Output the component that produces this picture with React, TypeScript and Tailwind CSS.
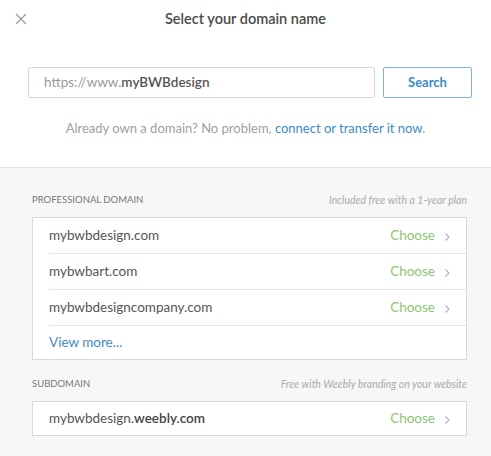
const font = { fontFamily: 'Lato, "Open Sans", "Liberation Sans", sans-serif' };

const professional = ["mybwbdesign.com", "mybwbart.com", "mybwbdesigncompany.com"];

function Chevron() {
  return (
    <svg width="7" height="10" viewBox="0 0 7 10" className="ml-[9px] mt-[2px]">
      <path d="M1.5 1.5 L5 5 L1.5 8.5" fill="none" stroke="#b5b5b5" strokeWidth="1.2" />
    </svg>
  );
}

function DomainRow({ children, last }: { children: React.ReactNode; last?: boolean }) {
  return (
    <div className="pl-4">
      <div
        className={`flex items-center justify-between pr-[15px] ${
          last ? "h-[33px]" : "h-9 border-b border-[#e6e6e6]"
        }`}
      >
        <span className="text-[13.5px] text-[#555]">{children}</span>
        <span className="flex items-center text-[13.5px] text-[#8dc572]">
          Choose
          <Chevron />
        </span>
      </div>
    </div>
  );
}

export default function App() {
  return (
    <div className="flex h-[456px] w-[491px] flex-col bg-[#f7f7f7]" style={font}>
      <div className="border-b border-[#e2e2e2] bg-white">
        <div className="relative flex h-[38px] items-center justify-center">
          <svg width="12" height="12" viewBox="0 0 12 12" className="absolute left-[15px] top-[13px]">
            <path d="M1 1 L11 11 M11 1 L1 11" stroke="#9a9a9a" strokeWidth="1.2" />
          </svg>
          <h1 className="text-[14.5px] font-semibold text-[#4a4a4a]">Select your domain name</h1>
        </div>
        <div className="mt-[29px] flex gap-2 px-7 pr-[19px]">
          <div className="flex h-[31px] flex-1 items-center rounded-[2px] border border-[#d6d6d6] px-[15px] text-[13.5px]">
            <span className="text-[#9a9a9a]">https://www.</span>
            <span className="font-semibold text-[#555]">myBWBdesign</span>
          </div>
          <button className="h-[31px] w-[89px] rounded-[2px] border border-[#7fb3dd] text-[13px] font-bold text-[#3d8ac8]">
            Search
          </button>
        </div>
        <p className="mb-[30px] mt-[21px] text-center text-[13px] leading-[18px] text-[#a0a0a0]">
          Already own a domain? No problem, <span className="text-[#3d8ac8]">connect or transfer it now</span>.
        </p>
      </div>

      <div className="pl-8 pr-6 pt-[25px]">
        <div className="flex items-center justify-between leading-[14px]">
          <span className="text-[9.5px] uppercase text-[#777]">Professional domain</span>
          <span className="text-[10.5px] italic text-[#aaa]">Included free with a 1-year plan</span>
        </div>
        <div className="mt-[10px] border border-[#d9d9d9] bg-white">
          {professional.map((d) => (
            <DomainRow key={d}>{d}</DomainRow>
          ))}
          <div className="flex h-[33px] items-center pl-4 text-[13.5px] text-[#3d8ac8]">View more...</div>
        </div>

        <div className="mt-[17px] flex items-center justify-between leading-[14px]">
          <span className="text-[9.5px] uppercase text-[#777]">Subdomain</span>
          <span className="text-[10.5px] italic text-[#aaa]">Free with Weebly branding on your website</span>
        </div>
        <div className="mt-[10px] border border-[#d9d9d9] bg-white">
          <DomainRow last>
            mybwbdesign.<span className="font-semibold text-[#444]">weebly.com</span>
          </DomainRow>
        </div>
      </div>
    </div>
  );
}
